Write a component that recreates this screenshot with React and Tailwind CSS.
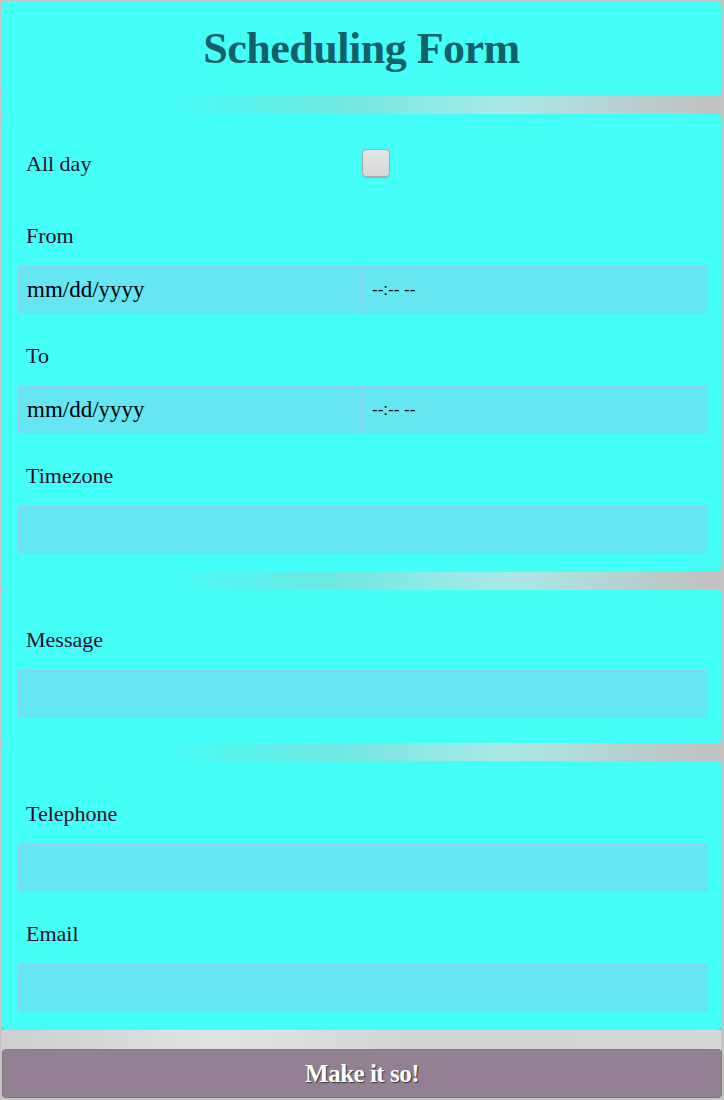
const serif = { fontFamily: '"Liberation Serif", "DejaVu Serif", serif' };

function Label({ children, className = '' }) {
  return (
    <div className={`h-[24px] pl-[24px] text-[22px] leading-[24px] text-[#2b0b2e] ${className}`}>
      {children}
    </div>
  );
}

function Field({ placeholder = '', sans = false, className = '' }) {
  return (
    <div
      className={`h-[48px] flex items-center pl-[8px] bg-[#66e5f2] border border-[#8fd3ef] text-[23px] text-black ${className}`}
      style={sans ? { fontFamily: '"Liberation Sans", Arial, sans-serif', fontSize: '17px' } : undefined}
    >
      {placeholder}
    </div>
  );
}

function Divider() {
  return (
    <div className="h-[18px] bg-[linear-gradient(to_right,#44fff7_22%,#6ee8e2_45%,#a9e9e6_70%,#c2c2c2_98%)]" />
  );
}

export default function App() {
  return (
    <div className="min-h-[1100px] bg-[#c4c4c4] pl-[2px] pr-[3px] pt-[2px]" style={serif}>
      <div className="h-[94px] bg-[#44fff7] rounded-[4px] flex items-center justify-center">
        <h1 className="text-[44px] font-bold text-[#12606a] tracking-[-0.5px] leading-none">Scheduling Form</h1>
      </div>
      <Divider />

      <div className="bg-[#44fff7] rounded-[4px] pl-[16px] pr-[13px] pt-[35px] pb-[18px]">
        <div className="flex items-center h-[28px]">
          <div className="w-[344px] pl-[8px] text-[22px] text-[#2b0b2e]">All day</div>
          <div className="w-[28px] h-[28px] rounded-[4px] border border-[#aaaaaa] bg-[linear-gradient(#e6e6e6,#d6d6d6)] shadow-[0_1px_1px_rgba(0,0,0,0.15)]" />
        </div>
        <Label className="mt-[47px] -ml-[16px]">From</Label>
        <div className="flex mt-[18px]">
          <Field placeholder="mm/dd/yyyy" className="w-[344px]" />
          <Field placeholder="--:-- --" sans className="flex-1 -ml-px border-l-[3px]" />
        </div>
        <Label className="mt-[30px] -ml-[16px]">To</Label>
        <div className="flex mt-[18px]">
          <Field placeholder="mm/dd/yyyy" className="w-[344px]" />
          <Field placeholder="--:-- --" sans className="flex-1 -ml-px border-l-[3px]" />
        </div>
        <Label className="mt-[30px] -ml-[16px]">Timezone</Label>
        <Field className="mt-[18px]" />
      </div>
      <Divider />

      <div className="bg-[#44fff7] rounded-[4px] pl-[16px] pr-[13px] pt-[38px] pb-[25px]">
        <Label className="-ml-[16px]">Message</Label>
        <Field className="mt-[18px]" />
      </div>
      <Divider />

      <div className="bg-[#44fff7] rounded-[4px] pl-[16px] pr-[13px] pt-[41px] pb-[18px] shadow-[0_2px_0_#3cc9c0]">
        <Label className="-ml-[16px]">Telephone</Label>
        <Field className="mt-[18px]" />
        <Label className="mt-[30px] -ml-[16px]">Email</Label>
        <Field className="mt-[18px]" />
      </div>

      <div className="h-[19px] bg-[linear-gradient(to_right,#cfcfcf,#e2e2e2_30%,#d4d4d4_60%,#d8d8d8)]" />
      <button className="w-[720px] h-[49px] rounded-[4px] bg-[#938193] border border-[#857585] text-white text-[25px] font-bold tracking-[-0.5px] [text-shadow:1px_1px_1px_#333]">
        Make it so!
      </button>
    </div>
  );
}
